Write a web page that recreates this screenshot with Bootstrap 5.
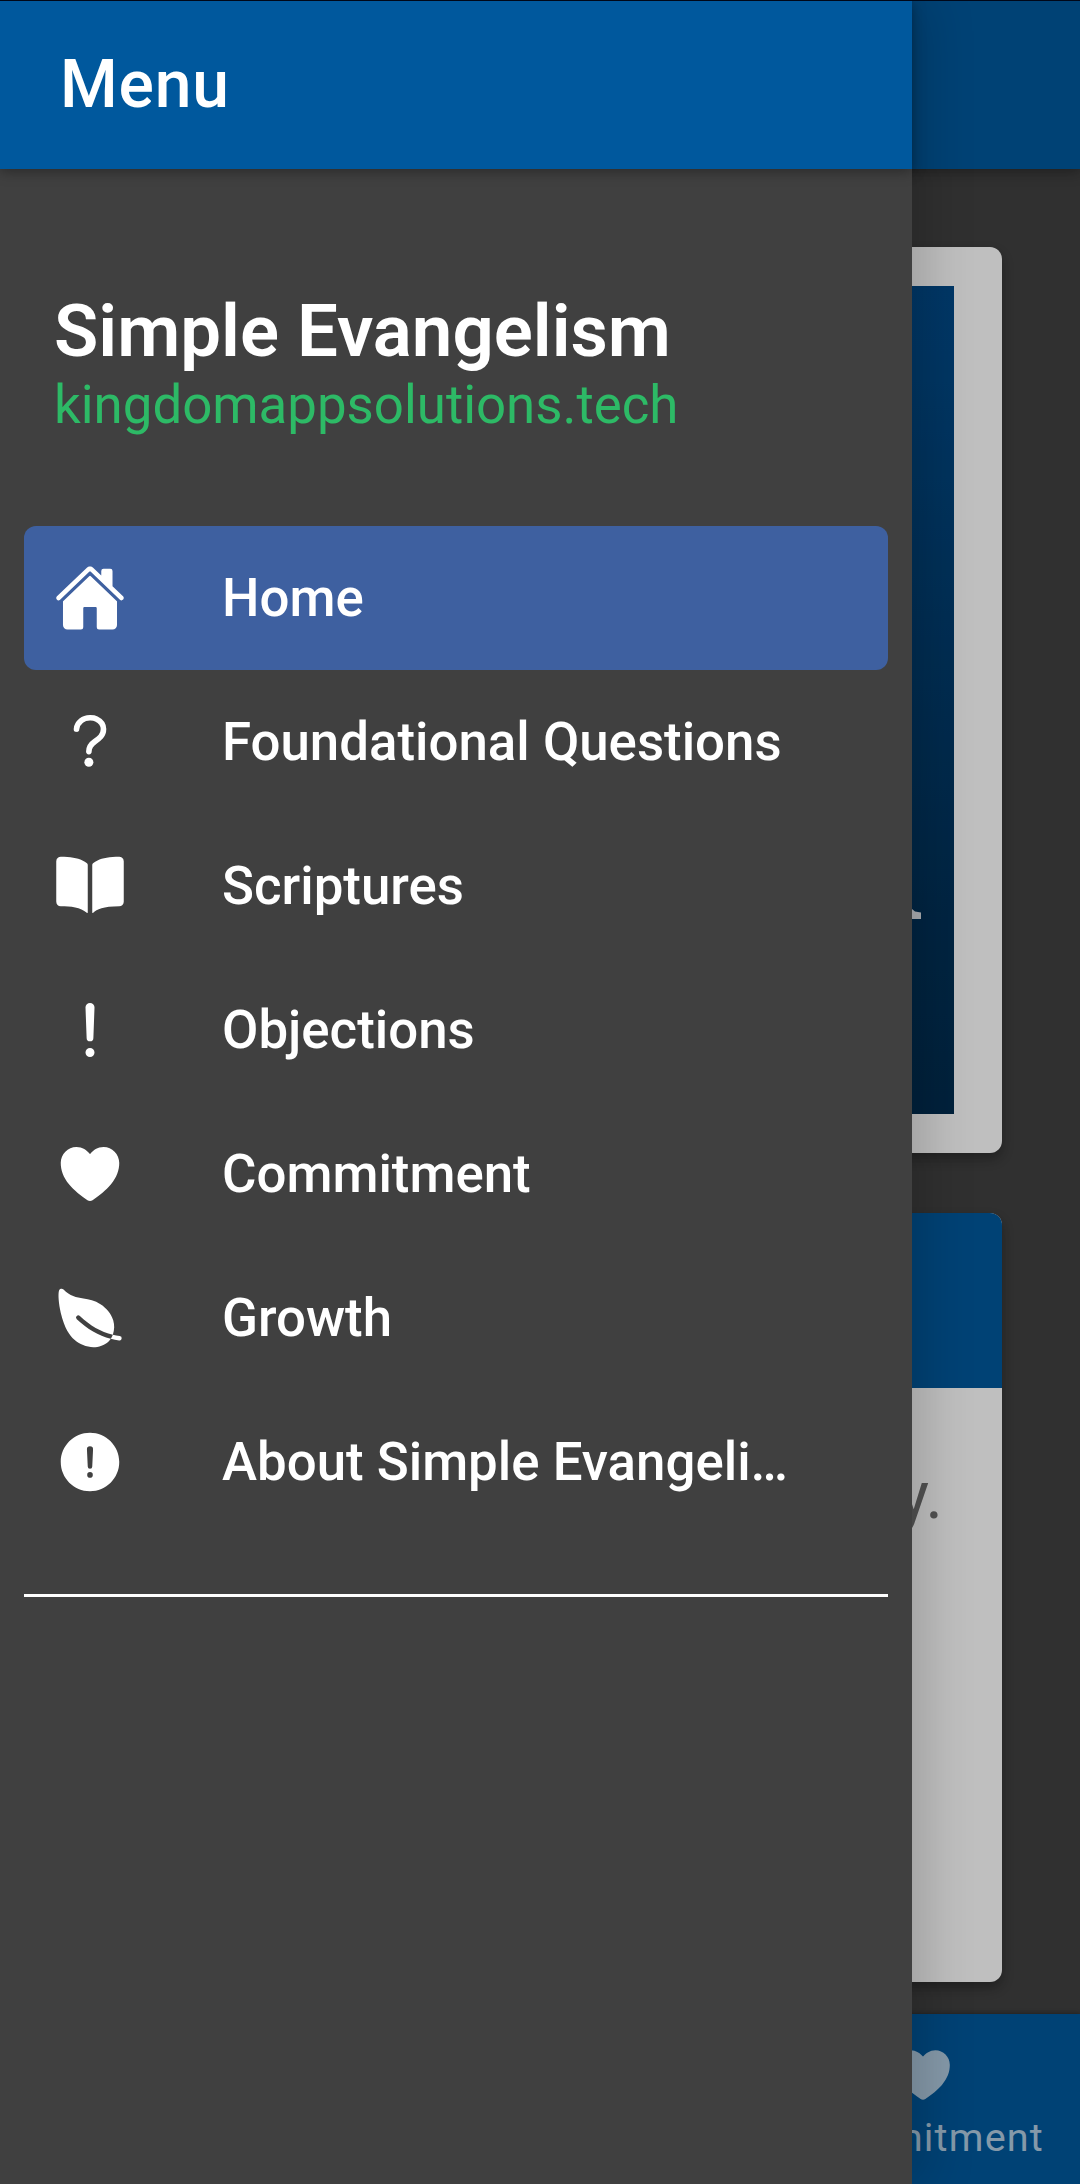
<!DOCTYPE html>
<html lang="en">
<head>
<meta charset="utf-8">
<meta name="viewport" content="width=device-width, initial-scale=1">
<title>Simple Evangelism</title>
<link href="https://cdn.jsdelivr.net/npm/bootstrap@5.3.0/dist/css/bootstrap.min.css" rel="stylesheet">
<style>
  html, body { height: 100%; }
  body { font-family: Roboto, "Noto Sans", sans-serif; background: #404040; }
  .app { width: 1080px; height: 2184px; background: #404040; }
  .app-line { height: 1px; background: #000718; z-index: 5; }
  .bar-blue { background: #00589d; }
  .app-head { height: 169px; box-shadow: 0 3px 12px rgba(0,0,0,.34); z-index: 1; }
  .app-main { padding: 78px 78px 32px; }
  .panel { border-radius: 12px; box-shadow: 0 6px 12px rgba(0,0,0,.3); }
  .panel-photo { height: 906px; padding: 39px 48px; margin-bottom: 60px; }
  .photo { background: linear-gradient(176deg, #004a88 0%, #004986 8%, #003158 72%, #002d50 92%, #002b4d 100%); background: linear-gradient(184deg, #004a88 0%, #004986 8%, #003158 72%, #002d50 92%, #002b4d 100%); }
  .photo-mark { position: absolute; right: 33px; bottom: 195px; width: 16px; height: 10px; }
  .panel-text { height: 769px; }
  .panel-head { height: 175px; }
  .panel-body { padding: 69px 59px; font-size: 66px; line-height: 78px; color: #6e6e6e; }
  .tabs-bar { height: 170px; padding: 28px 36px 0 0; box-shadow: 0 -1px 4px rgba(0,0,0,.3); }
  .tab-item { color: #b2cde2; font-size: 39.6px; letter-spacing: .03em; line-height: 48px; }
  .tab-item svg { width: 66px; height: 66px; margin-bottom: 6px; }
  .dim { background: rgba(0,0,0,.25); }
  .drawer { width: 912px; background: #404040; box-shadow: 12px 0 48px rgba(0,0,0,.18); }
  .drawer-head { padding-left: 60px; font-size: 66px; font-weight: 500; line-height: 169px; letter-spacing: .0125em; }
  .drawer-body { padding: 121px 24px 0; }
  .brand { font-size: 72.6px; font-weight: 600; line-height: 84px; padding-left: 30px; }
  .site { font-size: 52.8px; line-height: 63px; padding-left: 30px; color: #2dba66; margin-bottom: 89px; }
  .menu-row { height: 144px; border-radius: 12px; padding: 0 84px 0 30px; color: #fff; font-size: 52.8px; font-weight: 500; gap: 96px; }
  .menu-row svg { width: 72px; height: 72px; flex: none; }
  .menu-row span { padding-top: 2px; }
  .menu-row.current { background: #3e60a0; }
  .rule { height: 3px; background: #fff; margin-top: 60px; }
</style>
<script src="https://cdn.jsdelivr.net/npm/bootstrap@5.3.0/dist/js/bootstrap.bundle.min.js"></script>
</head>
<body>
<div class="app position-relative overflow-hidden d-flex flex-column">
  <header class="app-head bar-blue position-relative flex-shrink-0"></header>
  <main class="app-main flex-grow-1">
    <section class="panel panel-photo bg-white">
      <div class="position-relative h-100">
        <div class="photo h-100"></div>
        <svg class="photo-mark" viewBox="0 0 16 10"><path d="M0 0h7l3 2.5 6 1V10H0z" fill="#e6e8ee"/></svg>
      </div>
    </section>
    <section class="panel panel-text bg-white overflow-hidden">
      <div class="panel-head bar-blue"></div>
      <div class="panel-body text-end">y.</div>
    </section>
  </main>
  <footer class="tabs-bar bar-blue d-flex justify-content-end flex-shrink-0">
    <div class="tab-item d-flex flex-column align-items-center">
      <svg viewBox="0 0 512 512" fill="currentColor"><path d="M256 448a32 32 0 01-18-5.57c-78.59-53.35-112.62-89.93-131.39-112.8-40-48.75-59.15-98.8-58.61-153C48.63 114.52 98.46 64 159.08 64c44.08 0 74.61 24.83 92.39 45.51a6 6 0 009.06 0C278.31 88.81 308.84 64 352.92 64c60.62 0 110.45 50.52 111.08 112.64.54 54.21-18.63 104.26-58.61 153-18.77 22.87-52.8 59.45-131.39 112.8A32 32 0 01256 448z"/></svg>
      <span>Commitment</span>
    </div>
  </footer>

  <div class="dim position-absolute top-0 start-0 w-100 h-100 z-1"></div>

  <aside class="drawer position-absolute top-0 start-0 h-100 z-2 text-white">
    <div class="drawer-head app-head bar-blue position-relative">Menu</div>
    <div class="drawer-body">
      <div class="brand">Simple Evangelism</div>
      <div class="site">kingdomappsolutions.tech</div>
      <nav class="d-flex flex-column">
        <a class="menu-row current d-flex align-items-center text-decoration-none">
          <svg viewBox="0 0 512 512" fill="currentColor"><path d="M261.56 101.28a8 8 0 00-11.06 0L66.4 277.15a8 8 0 00-2.47 5.79L63.9 448a32 32 0 0032 32H192a16 16 0 0016-16V328a8 8 0 018-8h80a8 8 0 018 8v136a16 16 0 0016 16h96.06a32 32 0 0032-32V282.94a8 8 0 00-2.47-5.79z"/><path d="M490.91 244.15l-74.8-71.56V64a16 16 0 00-16-16h-48a16 16 0 00-16 16v32l-57.92-55.38C272.77 35.14 264.71 32 256 32c-8.68 0-16.72 3.14-22.14 8.63l-212.7 203.5c-6.22 6-7 15.87-1.34 22.37A16 16 0 0043 267.56L250.5 69.28a8 8 0 0111.06 0l207.52 198.28a16 16 0 0022.59-.44c6.14-6.36 5.63-16.86-.76-22.97z"/></svg>
          <span class="text-truncate">Home</span>
        </a>
        <a class="menu-row d-flex align-items-center text-decoration-none">
          <svg viewBox="0 0 512 512"><path d="M160 164s1.44-33 33.54-59.46C212.6 88.83 235.49 84.28 256 84c18.73-.23 35.47 2.94 45.48 7.82C318.59 100.2 352 120.6 352 164c0 45.67-29.18 66.37-62.35 89.18S248 298.36 248 324" fill="none" stroke="currentColor" stroke-linecap="round" stroke-width="40"/><circle cx="248" cy="400" r="32" fill="currentColor"/></svg>
          <span class="text-truncate">Foundational Questions</span>
        </a>
        <a class="menu-row d-flex align-items-center text-decoration-none">
          <svg viewBox="0 0 512 512" fill="currentColor"><path d="M202.24 74C166.11 56.75 115.61 48.3 48 48a31.36 31.36 0 00-17.92 5.33A32 32 0 0016 79.9V366c0 19.34 13.76 33.93 32 33.93 71.07 0 142.36 6.64 185.06 47a4.11 4.11 0 006.94-3V106.82a15.89 15.89 0 00-5.46-12A143 143 0 00202.24 74zM481.92 53.3A31.33 31.33 0 00464 48c-67.61.3-118.11 8.71-154.24 26a143.31 143.31 0 00-32.31 20.78 15.93 15.93 0 00-5.45 12v337.13a3.93 3.93 0 006.68 2.81c25.67-25.5 70.72-46.82 185.36-46.81a32 32 0 0032-32v-288a32 32 0 00-14.12-26.61z"/></svg>
          <span class="text-truncate">Scriptures</span>
        </a>
        <a class="menu-row d-flex align-items-center text-decoration-none">
          <svg viewBox="0 0 512 512" fill="currentColor" stroke="currentColor" stroke-width="32"><path d="M256 80c-8.66 0-16.58 7.36-16 16l8 216a8 8 0 008 8 8 8 0 008-8l8-216c.58-8.64-7.34-16-16-16z"/><circle cx="256" cy="416" r="16"/></svg>
          <span class="text-truncate">Objections</span>
        </a>
        <a class="menu-row d-flex align-items-center text-decoration-none">
          <svg viewBox="0 0 512 512" fill="currentColor"><path d="M256 448a32 32 0 01-18-5.57c-78.59-53.35-112.62-89.93-131.39-112.8-40-48.75-59.15-98.8-58.61-153C48.63 114.52 98.46 64 159.08 64c44.08 0 74.61 24.83 92.39 45.51a6 6 0 009.06 0C278.31 88.81 308.84 64 352.92 64c60.62 0 110.45 50.52 111.08 112.64.54 54.21-18.63 104.26-58.61 153-18.77 22.87-52.8 59.45-131.39 112.8A32 32 0 01256 448z"/></svg>
          <span class="text-truncate">Commitment</span>
        </a>
        <a class="menu-row d-flex align-items-center text-decoration-none">
          <svg viewBox="0 0 512 512" fill="currentColor"><path d="M161.35 242a16 16 0 0122.62-.68c73.63 69.36 147.51 111.56 234.45 133.07 11.73-32 12.77-67.22 2.64-101.58-13.44-45.59-44.74-85.31-90.49-114.86-40.84-26.38-81.66-33.25-121.15-39.89-49.82-8.38-96.88-16.3-141.79-63.85-5-5.26-11.81-7.37-18.32-5.66-7.44 2-12.43 7.88-14.82 17.6-5.6 22.75-2 86.51 13.75 153.82 25.29 108.14 65.65 162.86 95.06 189.73 38 34.69 87.62 53.9 136.93 53.9a186 186 0 0027.77-2.04c41.71-6.32 76.43-27.27 96-57.75-89.49-23.28-165.94-67.55-242-139.16a16 16 0 01-.65-22.65zM467.43 384.19c-16.83-2.59-33.13-5.84-49-9.77a157.71 157.71 0 01-12.13 25.68c-.73 1.25-1.5 2.49-2.29 3.71a584.21 584.21 0 0058.56 12 16 16 0 104.87-31.62z"/></svg>
          <span class="text-truncate">Growth</span>
        </a>
        <a class="menu-row d-flex align-items-center text-decoration-none">
          <svg viewBox="0 0 512 512" fill="currentColor"><path d="M256 48C141.31 48 48 141.31 48 256s93.31 208 208 208 208-93.31 208-208S370.69 48 256 48zm0 319.91a20 20 0 1120-20 20 20 0 01-20 20zm21.72-201.15l-5.74 122a16 16 0 01-32 0l-5.74-121.94v-.05a21.74 21.74 0 1143.44 0z"/></svg>
          <span class="text-truncate">About Simple Evangelism</span>
        </a>
      </nav>
      <div class="rule"></div>
    </div>
  </aside>
  <div class="app-line position-absolute top-0 start-0 w-100"></div>
</div>
</body>
</html>
